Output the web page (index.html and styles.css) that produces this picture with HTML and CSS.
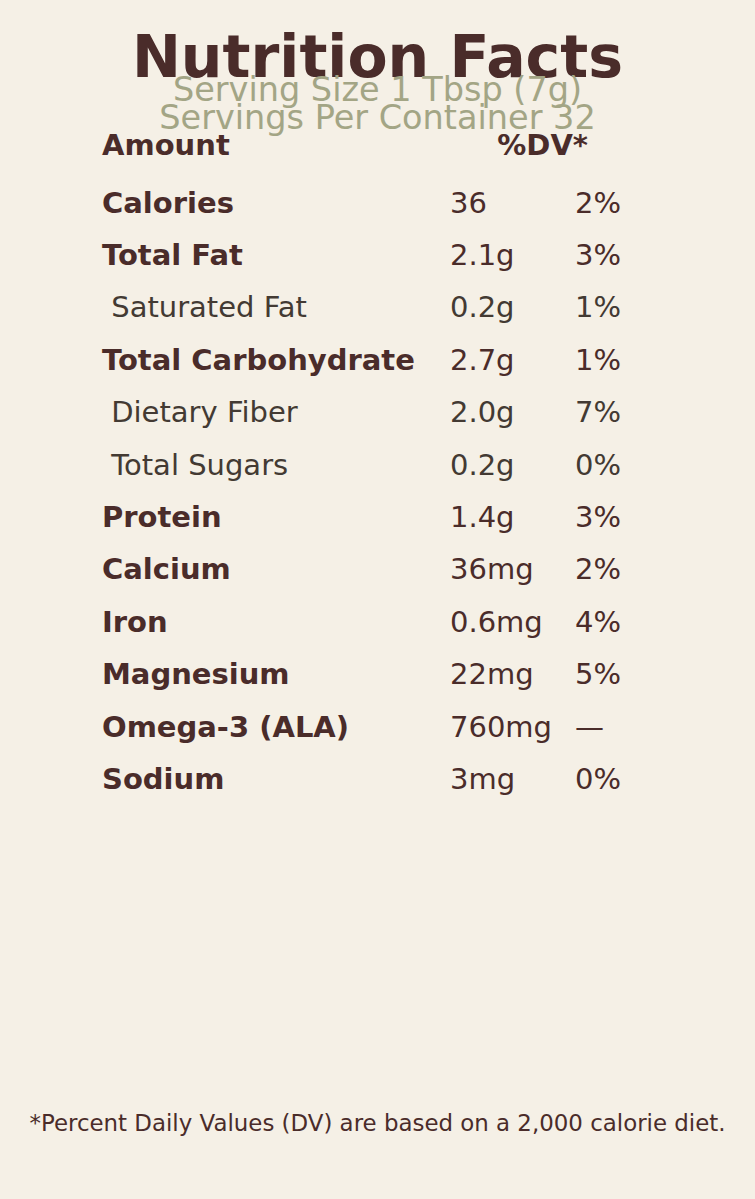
FILE: index.html
```html
<!DOCTYPE html>
<html lang="en">
<head>
    <meta charset="UTF-8">
    <meta name="viewport" content="width=device-width, initial-scale=1.0">
    <title>Nutrition Facts</title>
    <link rel="stylesheet" href="styles.css">
</head>
<body>
    <div class="label">
        <h1>Nutrition Facts</h1>
        <p class="serving">Serving Size 1 Tbsp (7g)<br>Servings Per Container 32</p>
        <div class="head-row">
            <span>Amount</span>
            <span>%DV*</span>
        </div>
        <div class="facts">
            <div class="row main"><span>Calories</span><span>36</span><span>2%</span></div>
            <div class="row main"><span>Total Fat</span><span>2.1g</span><span>3%</span></div>
            <div class="row sub"><span>&nbsp;Saturated Fat</span><span>0.2g</span><span>1%</span></div>
            <div class="row main"><span>Total Carbohydrate</span><span>2.7g</span><span>1%</span></div>
            <div class="row sub"><span>&nbsp;Dietary Fiber</span><span>2.0g</span><span>7%</span></div>
            <div class="row sub"><span>&nbsp;Total Sugars</span><span>0.2g</span><span>0%</span></div>
            <div class="row main"><span>Protein</span><span>1.4g</span><span>3%</span></div>
            <div class="row main"><span>Calcium</span><span>36mg</span><span>2%</span></div>
            <div class="row main"><span>Iron</span><span>0.6mg</span><span>4%</span></div>
            <div class="row main"><span>Magnesium</span><span>22mg</span><span>5%</span></div>
            <div class="row main"><span>Omega-3 (ALA)</span><span>760mg</span><span>&mdash;</span></div>
            <div class="row main"><span>Sodium</span><span>3mg</span><span>0%</span></div>
        </div>
    </div>
    <p class="footnote">*Percent Daily Values (DV) are based on a 2,000 calorie diet.</p>
</body>
</html>
```

FILE: styles.css
```css
* {
    box-sizing: border-box;
    font-family: 'DejaVu Sans', Verdana, sans-serif;
}

body {
    margin: 0;
    min-height: 100vh;
    display: flex;
    flex-direction: column;
    background: #f5f0e6;
    color: #4a2c2a;
}

.label {
    padding: 31px 102px 0;
}

h1 {
    margin: 0;
    font-size: 58.5px;
    line-height: 52px;
    font-weight: bold;
    text-align: center;
}

.serving {
    margin: -6.7px 0 0;
    font-size: 33.5px;
    line-height: 27.6px;
    color: #a3a585;
    text-align: center;
}

.head-row {
    display: flex;
    justify-content: space-between;
    margin-top: -2.5px;
    padding-right: 65px;
    font-size: 29px;
    line-height: 32px;
    font-weight: bold;
}

.facts {
    margin-top: 15.5px;
}

.row {
    display: grid;
    grid-template-columns: 348px 125px 1fr;
    font-size: 29px;
    line-height: 52.4px;
}

.row.main span:first-child {
    font-weight: bold;
}

.row.sub {
    color: #433a33;
}

.footnote {
    margin: auto 0 0;
    padding-bottom: 62px;
    font-size: 22.9px;
    line-height: 27px;
    text-align: center;
}
```
